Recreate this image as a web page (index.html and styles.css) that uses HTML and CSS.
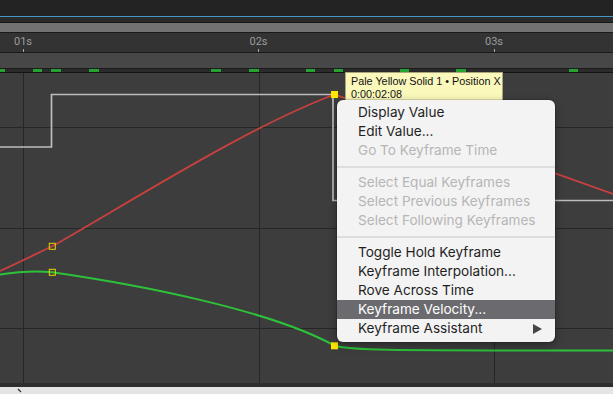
FILE: index.html
```html
<!DOCTYPE html>
<html lang="en">
  <head>
    <meta charset="UTF-8" />
    <title>Graph Editor</title>
    <link rel="stylesheet" href="styles.css">
  </head>
  <body>
    <div class="app">
      <div class="titlebar"></div>
      <div class="accent"></div>
      <div class="toolbar"></div>
      <div class="scrollbar"></div>

      <!-- time ruler -->
      <div class="ruler">
        <div class="mark"><span>01s</span><i></i></div>
        <div class="mark"><span>02s</span><i></i></div>
        <div class="mark"><span>03s</span><i></i></div>
      </div>

      <div class="work-area"></div>

      <!-- keyframe markers -->
      <svg class="keys" width="613" height="4" viewBox="0 0 613 4">
        <rect x="0" y="0" width="613" height="1" fill="#1c1c1c" />
        <g fill="#27a232">
          <rect x="0" y="1" width="5" height="3" />
          <rect x="33" y="1" width="9" height="3" />
          <rect x="51" y="1" width="10" height="3" />
          <rect x="89" y="1" width="10" height="3" />
          <rect x="211" y="1" width="10" height="3" />
          <rect x="249" y="1" width="10" height="3" />
          <rect x="306" y="1" width="9" height="3" />
          <rect x="334" y="1" width="9" height="3" />
          <rect x="400" y="1" width="9" height="3" />
          <rect x="456" y="1" width="10" height="3" />
          <rect x="569" y="1" width="9" height="3" />
        </g>
      </svg>

      <div class="graph">
        <svg width="613" height="310" viewBox="0 73 613 310">
          <g stroke="#262626" stroke-width="1">
            <line x1="23.5" y1="73" x2="23.5" y2="383" />
            <line x1="259.5" y1="73" x2="259.5" y2="383" />
            <line x1="494.5" y1="73" x2="494.5" y2="383" />
            <line x1="0" y1="127.5" x2="613" y2="127.5" />
            <line x1="0" y1="228.5" x2="613" y2="228.5" />
            <line x1="0" y1="328.5" x2="613" y2="328.5" />
          </g>

          <!-- hold / speed line -->
          <path d="M0,147 L51.5,147 L51.5,94.5 L333,94.5 L333,200.5 L613,200.5"
            fill="none" stroke="#bdbdbd" stroke-width="1.7" />

          <!-- position x -->
          <path d="M0,271 C20,262 40,252 52.3,246.3 C140,196 250,126 334.5,94.5 L613,194"
            fill="none" stroke="#c8403f" stroke-width="1.8" />

          <!-- position y -->
          <path d="M0,274.5 C20,271.5 38,271 52.3,272.3 C140,285 270,310 334.5,345.7 C350,350 370,350.5 613,350.5"
            fill="none" stroke="#2dc23a" stroke-width="2" />

          <rect x="49.3" y="243.3" width="6" height="6" fill="none" stroke="#e8d500" stroke-width="1" />
          <rect x="49.3" y="269.3" width="6" height="6" fill="none" stroke="#e8d500" stroke-width="1" />
          <rect x="331" y="91" width="7" height="7" fill="#ffe600" />
          <rect x="331" y="342.3" width="7" height="7" fill="#ffe600" />
        </svg>
      </div>

      <div class="graph-foot"></div>
      <div class="statusbar">
        <svg width="6" height="7" viewBox="0 0 6 7">
          <path d="M1,1 L4,4" stroke="#333" stroke-width="1.2" fill="none" />
        </svg>
      </div>

      <div class="tooltip">
        <div>Pale Yellow Solid 1 • Position X</div>
        <div>0:00:02:08</div>
      </div>

      <ul class="menu">
        <li>Display Value</li>
        <li>Edit Value...</li>
        <li class="disabled">Go To Keyframe Time</li>
        <li class="sep"></li>
        <li class="disabled">Select Equal Keyframes</li>
        <li class="disabled">Select Previous Keyframes</li>
        <li class="disabled">Select Following Keyframes</li>
        <li class="sep"></li>
        <li>Toggle Hold Keyframe</li>
        <li>Keyframe Interpolation...</li>
        <li>Rove Across Time</li>
        <li class="active">Keyframe Velocity...</li>
        <li class="sub">Keyframe Assistant<span class="arrow"></span></li>
      </ul>
    </div>
  </body>
</html>
```

FILE: styles.css
```css
:root {
  --panel: #3d3d3d;
  --line: #1a1a1a;
  --menu-bg: #f3f3f3;
  --menu-text: #1f1f1f;
  --menu-muted: #b6b6b6;
  --font: Inter, "Liberation Sans", Arial, sans-serif;
}

* {
  box-sizing: border-box;
}

html,
body {
  margin: 0;
  height: 100%;
  background: #232323;
}

.app {
  position: relative;
  width: 613px;
  height: 394px;
  overflow: hidden;
  display: flex;
  flex-direction: column;
  font-family: var(--font);
}

.titlebar {
  height: 16px;
  background: #232323;
}

.accent {
  height: 1px;
  background: #4796c6;
}

.toolbar {
  height: 6px;
  background: #2a2a2a;
  border-bottom: 1px solid #151515;
}

.scrollbar {
  height: 10px;
  background: #727272;
  border-bottom: 1px solid var(--line);
}

/* time ruler */
.ruler {
  height: 20px;
  display: flex;
  gap: 195.5px;
  padding-left: 3px;
  background: #333333;
  border-bottom: 1px solid var(--line);
}

.mark {
  width: 40px;
  display: flex;
  flex-direction: column;
  align-items: center;
}

.mark span {
  margin-top: 2px;
  height: 13px;
  font-family: Roboto, "Liberation Sans", sans-serif;
  font-size: 11px;
  line-height: 13px;
  color: #9c9c9c;
}

.mark i {
  display: block;
  margin-top: 1px;
  width: 1px;
  height: 3px;
  background: #a8a8a8;
}

.work-area {
  height: 15px;
  background: #474747;
}

.keys {
  display: block;
  flex: none;
  background: #2b2b2b;
}

.graph {
  height: 311px;
  background: var(--panel);
  border-top: 1px solid #141414;
}

.graph svg {
  display: block;
}

.graph-foot {
  height: 4px;
  background: #2e2e2e;
}

.statusbar {
  height: 7px;
  padding-left: 17px;
  background: #e4e4e4;
}

.statusbar svg {
  display: block;
  margin-top: 1px;
}

/* hover tooltip */
.tooltip {
  position: absolute;
  left: 345px;
  top: 72px;
  width: 158px;
  height: 30px;
  padding: 2px 0 0 5px;
  background: #fbf8bb;
  border: 1px solid #a9a67c;
  font-family: "Liberation Sans", Arial, sans-serif;
  font-size: 10.8px;
  line-height: 13px;
  color: #111;
  white-space: nowrap;
}

/* context menu */
.menu {
  position: absolute;
  left: 337px;
  top: 100px;
  width: 218px;
  margin: 0;
  padding: 3px 0 4px;
  list-style: none;
  background: var(--menu-bg);
  border-radius: 6px;
  box-shadow: 0 3px 10px rgba(0, 0, 0, 0.35), 0 0 0 1px rgba(0, 0, 0, 0.12);
}

.menu li {
  height: 19px;
  padding-left: 21px;
  font-size: 13.6px;
  line-height: 19px;
  color: var(--menu-text);
  white-space: nowrap;
}

.menu li.disabled {
  color: var(--menu-muted);
}

.menu li.sep {
  height: 13px;
  position: relative;
}

.menu li.sep::after {
  content: "";
  position: absolute;
  left: 0;
  right: 0;
  top: 6px;
  height: 2px;
  background: #dddddd;
}

.menu li.active {
  background: #6b6b6f;
  color: #ffffff;
}

.menu li.sub {
  display: flex;
  align-items: center;
  justify-content: space-between;
  padding-right: 13px;
}

.arrow {
  width: 0;
  height: 0;
  border-left: 9px solid #474747;
  border-top: 5px solid transparent;
  border-bottom: 5px solid transparent;
}
```
